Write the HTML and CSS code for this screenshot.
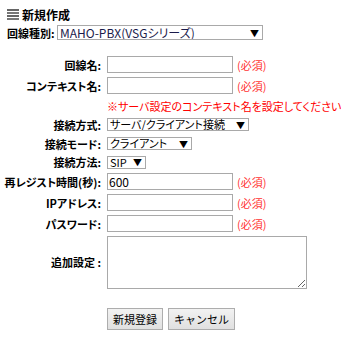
FILE: index.html
```html
<!DOCTYPE html>
<html lang="ja">
<head>
    <meta charset="UTF-8">
    <title>新規作成</title>
    <link rel="stylesheet" href="styles.css">
</head>
<body>

<div class="page">
    <!-- 見出し -->
    <h2 class="title">
        <svg class="title-icon" width="12" height="11" viewBox="0 0 12 11">
            <rect x="0" y="0" width="12" height="2" fill="#666"/>
            <rect x="0" y="3" width="12" height="2" fill="#777"/>
            <rect x="0" y="6" width="12" height="2" fill="#666"/>
            <rect x="0" y="9" width="12" height="2" fill="#777"/>
        </svg>
        新規作成
    </h2>

    <!-- 回線種別 -->
    <div class="type-row">
        <label class="type-label">回線種別:</label>
        <span class="sel-wrap">
            <select class="sel sel-type">
                <option>MAHO-PBX(VSGシリーズ)</option>
            </select>
        </span>
    </div>

    <!-- 入力フォーム -->
    <form class="form">
        <div class="row">
            <label class="lbl">回線名:</label>
            <input type="text" class="txt">
            <span class="req">(必須)</span>
        </div>
        <div class="row">
            <label class="lbl">コンテキスト名:</label>
            <input type="text" class="txt">
            <span class="req">(必須)</span>
        </div>
        <div class="row row-note">
            <span class="lbl"></span>
            <span class="note">※サーバ設定のコンテキスト名を設定してください</span>
        </div>
        <div class="row row-sel">
            <label class="lbl">接続方式:</label>
            <span class="sel-wrap">
                <select class="sel sel-method">
                    <option>サーバ/クライアント接続</option>
                </select>
            </span>
        </div>
        <div class="row row-sel">
            <label class="lbl">接続モード:</label>
            <span class="sel-wrap">
                <select class="sel sel-mode">
                    <option>クライアント</option>
                </select>
            </span>
        </div>
        <div class="row row-sel row-proto">
            <label class="lbl">接続方法:</label>
            <span class="sel-wrap">
                <select class="sel sel-proto">
                    <option>SIP</option>
                </select>
            </span>
        </div>
        <div class="row">
            <label class="lbl">再レジスト時間(秒):</label>
            <input type="text" class="txt" value="600">
            <span class="req">(必須)</span>
        </div>
        <div class="row">
            <label class="lbl">IPアドレス:</label>
            <input type="text" class="txt">
            <span class="req">(必須)</span>
        </div>
        <div class="row">
            <label class="lbl">パスワード:</label>
            <input type="password" class="txt">
            <span class="req">(必須)</span>
        </div>
        <div class="row row-area">
            <label class="lbl">追加設定 :</label>
            <textarea class="area"></textarea>
        </div>
        <div class="row row-buttons">
            <span class="lbl"></span>
            <button type="button" class="btn">新規登録</button>
            <button type="button" class="btn">キャンセル</button>
        </div>
    </form>
</div>

</body>
</html>
```

FILE: styles.css
```css
body {
    margin: 0;
    background-color: #fff;
    color: #000;
    font-family: "Noto Sans CJK JP", "Liberation Sans", sans-serif;
    font-size: 11px;
}

.page {
    padding: 7px 7px 0 7px;
}

.title {
    display: flex;
    align-items: center;
    gap: 3px;
    margin: 0;
    height: 14px;
    font-size: 12px;
    font-weight: bold;
}

.title-icon {
    display: block;
}

.type-row {
    display: flex;
    align-items: center;
    margin-top: 4px;
    height: 15px;
}

.type-label {
    font-weight: bold;
    width: 50px;
    white-space: nowrap;
    font-feature-settings: "palt";
}

.sel-wrap {
    position: relative;
    display: inline-block;
}

.sel-wrap::after {
    content: "▼";
    position: absolute;
    right: 4px;
    top: 50%;
    transform: translateY(-50%);
    font-size: 9px;
    pointer-events: none;
}

.sel {
    appearance: none;
    -webkit-appearance: none;
    display: block;
    margin: 0;
    padding: 0 2px;
    border: 1px solid #a9a9a9;
    border-radius: 0;
    background-color: #fff;
    color: #000;
    font-family: "Noto Sans CJK JP", "Liberation Sans", sans-serif;
    font-size: 11px;
    line-height: 1;
    font-feature-settings: "palt";
}

.sel-type {
    width: 206px;
    height: 15px;
    font-size: 12px;
    color: #1b1b4b;
}

.sel-method {
    width: 142px;
    height: 13px;
}

.sel-mode {
    width: 85px;
    height: 13px;
}

.sel-proto {
    width: 39px;
    height: 13px;
}

.form {
    margin-top: 14px;
}

.row {
    display: flex;
    align-items: center;
    height: 21px;
}

.row-note {
    height: 19px;
}

.row-sel {
    height: 19px;
}

.row-proto {
    height: 18px;
}

.row-area {
    height: 56px;
}

.row-buttons {
    margin-top: 17px;
    height: 23px;
    gap: 5px;
}

.lbl {
    display: flex;
    justify-content: flex-end;
    width: 94px;
    flex-shrink: 0;
    margin-right: 6px;
    white-space: nowrap;
    font-weight: bold;
    font-feature-settings: "palt";
}

.row-buttons .lbl {
    margin-right: 1px;
}

.txt {
    box-sizing: border-box;
    width: 126px;
    height: 17px;
    margin: 0;
    padding: 0 1px;
    border: 1px solid #a9a9a9;
    font-family: "Noto Sans CJK JP", "Liberation Sans", sans-serif;
    font-size: 12px;
}

.req {
    margin-left: 4px;
    color: #f33;
    font-size: 11px;
    font-feature-settings: "palt";
}

.note {
    color: #f00;
    font-size: 11px;
    white-space: nowrap;
    font-feature-settings: "palt";
}

.area {
    box-sizing: border-box;
    width: 200px;
    height: 53px;
    margin: 0;
    border: 1px solid #a9a9a9;
    resize: both;
}

.btn {
    box-sizing: border-box;
    height: 22px;
    padding: 0 5px;
    border: 1px solid #adadad;
    border-radius: 0;
    background: linear-gradient(#f2f2f2, #e0e0e0);
    color: #000;
    font-family: "Noto Sans CJK JP", "Liberation Sans", sans-serif;
    font-size: 11px;
}
```
